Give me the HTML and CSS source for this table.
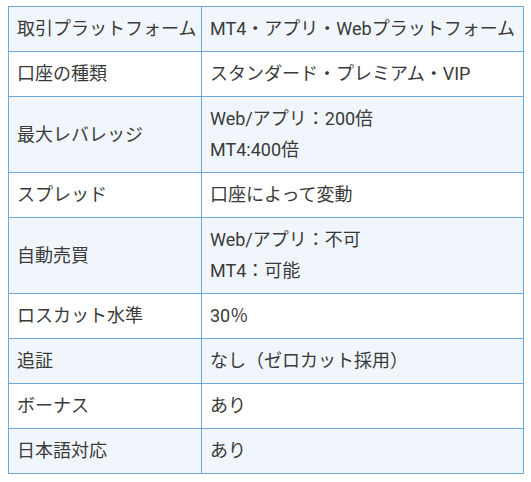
FILE: index.html
```html
<!DOCTYPE html>
<html lang="ja">
<head>
<meta charset="utf-8">
<link rel="stylesheet" href="styles.css">
</head>
<body>
<table class="spec">
  <colgroup><col class="c1"><col></colgroup>
  <tbody>
    <tr class="alt"><td>取引プラットフォーム</td><td>MT4・アプリ・Webプラットフォーム</td></tr>
    <tr><td>口座の種類</td><td>スタンダード・プレミアム・VIP</td></tr>
    <tr class="alt"><td>最大レバレッジ</td><td>Web/アプリ：200倍<br>MT4:400倍</td></tr>
    <tr><td>スプレッド</td><td>口座によって変動</td></tr>
    <tr class="alt"><td>自動売買</td><td>Web/アプリ：不可<br>MT4：可能</td></tr>
    <tr><td>ロスカット水準</td><td>30％</td></tr>
    <tr class="alt"><td>追証</td><td>なし（ゼロカット採用）</td></tr>
    <tr><td>ボーナス</td><td>あり</td></tr>
    <tr class="alt"><td>日本語対応</td><td>あり</td></tr>
  </tbody>
</table>
</body>
</html>
```
FILE: styles.css
```css
html, body { background: #ffffff; }
body {
  margin: 6px 7px 8px 8px;
  font-family: Roboto, "Noto Sans CJK JP", sans-serif;
  color: #3a3a3a;
}
.spec {
  width: 516px;
  border-collapse: collapse;
  table-layout: fixed;
  font-size: 18px;
}
.spec .c1 { width: 193px; }
.spec td {
  border: 1px solid #6fa8dc;
  padding: 6px 8px 7px 8px;
  line-height: 31px;
  vertical-align: middle;
  white-space: nowrap;
}
.spec tr.alt td { background: #f1f6fd; }
```
